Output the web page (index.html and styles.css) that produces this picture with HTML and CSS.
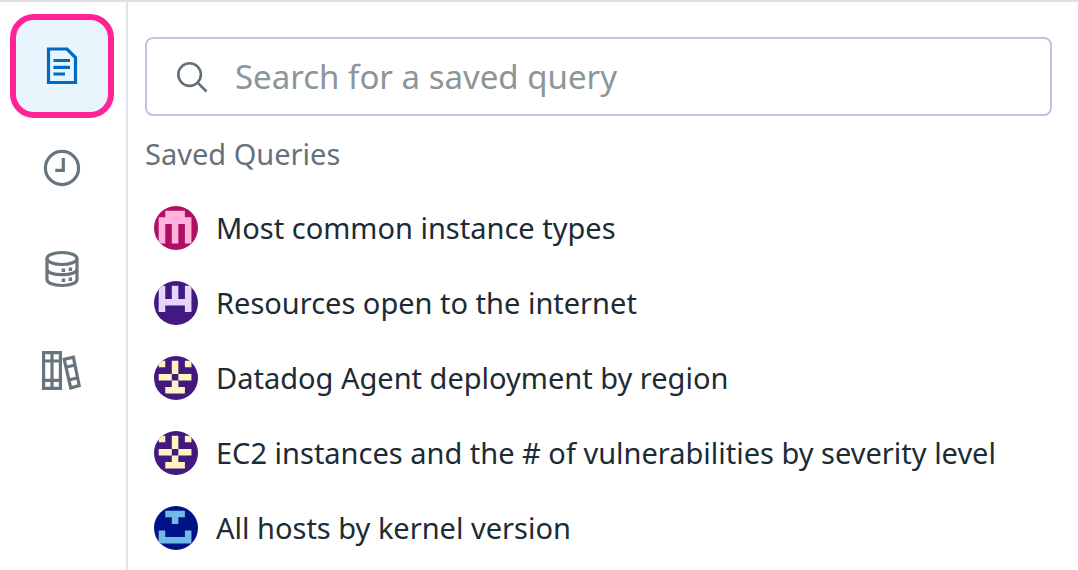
FILE: index.html
```html
<!DOCTYPE html>
<html lang="en">
<head>
<meta charset="utf-8">
<meta name="viewport" content="width=device-width, initial-scale=1">
<title>Saved Queries</title>
<link rel="stylesheet" href="styles.css">
</head>
<body>
<div class="app">
  <nav class="rail" aria-label="Panels">
    <button class="rail-button rail-button-active" type="button" aria-label="Saved queries">
      <svg class="icon" viewBox="0 0 40 40"><path d="M6.5 3H25L33.500 11.500V36.500H6.500Z M11.500 14.500H28M11.500 21.300H28M11.500 28H23"/></svg>
    </button>
    <button class="rail-button" type="button" aria-label="Recent queries">
      <svg class="icon" viewBox="0 0 40 40"><circle cx="20" cy="20" r="16.600"/><path d="M21.300 10V22.300H13.300"/></svg>
    </button>
    <button class="rail-button" type="button" aria-label="Data sources">
      <svg class="icon" viewBox="0 0 40 40"><ellipse cx="20" cy="9.500" rx="15" ry="6"/><path d="M5 9.500V30.500C5 34 11.500 36.500 20 36.500S35 34 35 30.500V9.500M5 20C5 23.500 11.500 25.700 20 25.700S35 23.500 35 20"/><path class="solid" d="M19.700 19.500h3.400v3.400h-3.400zM26.700 18.500h3.400v3.400h-3.400zM19.700 29.500h3.400v3.400h-3.400zM26.700 28.500h3.400v3.400h-3.400z"/></svg>
    </button>
    <button class="rail-button" type="button" aria-label="Library">
      <svg class="icon" viewBox="0 0 40 40"><path d="M1.600 2.600H18.400V38.400H1.600ZM10 2.600V38.400M1.600 11H18.400M1.600 30.300H18.400M22.200 9.400L31.400 7.200L37.200 35.500L28.700 37.900ZM23.900 17.200L33 15M26.800 30L35.800 27.800"/></svg>
    </button>
  </nav>
  <main class="panel">
    <label class="search">
      <svg class="search-icon" viewBox="0 0 32 32"><circle cx="13.600" cy="13.600" r="11.300"/><path d="M21.600 21.600L30.500 30.500"/></svg>
      <input class="search-input" type="search" placeholder="Search for a saved query" aria-label="Search for a saved query">
    </label>
    <h2 class="heading">Saved Queries</h2>
    <ul class="queries">
      <li><button class="query" type="button">
        <svg class="avatar avatar-pink" viewBox="0 0 44 44"><path transform="translate(4.7 4.8) scale(6.55)" d="M1 0H4V1H5V5H4V2H3V5H2V2H1V5H0V1H1Z"/></svg>
        <span>Most common instance types</span></button></li>
      <li><button class="query" type="button">
        <svg class="avatar avatar-lilac" viewBox="0 0 44 44"><path transform="translate(4.7 4.8) scale(6.55)" d="M0 0H1V2H2V0H3V2H4V0H5V4H4V3H1V4H0Z"/></svg>
        <span>Resources open to the internet</span></button></li>
      <li><button class="query" type="button">
        <svg class="avatar avatar-cream" viewBox="0 0 44 44"><path transform="translate(4.7 4.8) scale(6.55)" d="M0 0H1V1H0ZM4 0H5V1H4ZM2 0H3V2H2ZM0 2H2V3H0ZM3 2H5V3H3ZM2 3H3V4H4V5H1V4H2Z"/></svg>
        <span>Datadog Agent deployment by region</span></button></li>
      <li><button class="query" type="button">
        <svg class="avatar avatar-cream" viewBox="0 0 44 44"><path transform="translate(4.7 4.8) scale(6.55)" d="M0 0H1V1H0ZM4 0H5V1H4ZM2 0H3V2H2ZM0 2H2V3H0ZM3 2H5V3H3ZM2 3H3V4H4V5H1V4H2Z"/></svg>
        <span>EC2 instances and the # of vulnerabilities by severity level</span></button></li>
      <li><button class="query" type="button">
        <svg class="avatar avatar-blue" viewBox="0 0 44 44"><path transform="translate(4.7 4.8) scale(6.55)" d="M1 0H4V1H3V2H2V1H1ZM0 3H1V4H4V3H5V5H0Z"/></svg>
        <span>All hosts by kernel version</span></button></li>
    </ul>
  </main>
</div>
</body>
</html>
```
FILE: styles.css
```css
* {
  box-sizing: border-box;
}

body {
  margin: 0;
  background: #fff;
  color: #1c2b34;
  font-family: "Noto Sans", sans-serif;
}

button,
input {
  font: inherit;
  color: inherit;
}

.app {
  display: flex;
  min-height: 100vh;
  border-top: 2px solid #e0e0e0;
}

.rail {
  display: flex;
  flex: none;
  flex-direction: column;
  padding: 12px 12px 0 10px;
  border-right: 2px solid #dfe1ee;
}

.rail-button {
  display: flex;
  align-items: center;
  justify-content: center;
  width: 104px;
  height: 100px;
  margin-bottom: 1px;
  padding: 0;
  border: 0;
  background: none;
  color: #68757d;
}

.rail-button-active {
  height: 104px;
  margin-bottom: 0;
  border: 6px solid #ff2396;
  border-radius: 24px;
  background: #e8f5fc;
  color: #006bc2;
}

.icon {
  width: 40px;
  height: 40px;
  fill: none;
  stroke: currentColor;
  stroke-width: 3.2;
}

.icon .solid {
  fill: currentColor;
  stroke: none;
}

.panel {
  flex: 1;
  min-width: 0;
  padding: 35px 26px 0 17px;
}

.search {
  display: flex;
  align-items: center;
  gap: 27px;
  height: 79px;
  padding: 0 29px;
  border: 2px solid #bfc5de;
  border-radius: 8px;
}

.search-icon {
  flex: none;
  width: 32px;
  height: 32px;
  fill: none;
  stroke: #636f77;
  stroke-width: 2.6;
}

.search-input {
  flex: 1;
  min-width: 0;
  padding: 0;
  border: 0;
  outline: 0;
  background: none;
  font-size: 33px;
}

.search-input::placeholder {
  color: #8b959a;
  opacity: 1;
}

.heading {
  margin: 18px 0 16px;
  color: #65727a;
  font-size: 29px;
  font-weight: 400;
  line-height: 40px;
}

.queries {
  margin: 0;
  padding: 0;
  list-style: none;
}

.query {
  display: flex;
  align-items: center;
  gap: 18px;
  width: 100%;
  min-height: 75px;
  padding: 0 9px;
  border: 0;
  background: none;
  font-size: 29px;
  line-height: 40px;
  text-align: left;
}

.avatar {
  flex: none;
  width: 44px;
  height: 44px;
  border-radius: 50%;
}

.avatar-pink {
  background: #ae1164;
  fill: #ffb3dd;
}

.avatar-lilac {
  background: #42197e;
  fill: #e6d5fa;
}

.avatar-cream {
  background: #42197e;
  fill: #fff3bf;
}

.avatar-blue {
  background: #001285;
  fill: #73b9e8;
}
```
